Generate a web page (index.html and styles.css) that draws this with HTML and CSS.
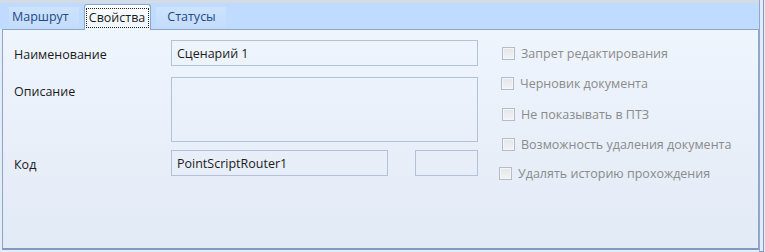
FILE: index.html
```html
<!DOCTYPE html>
<html lang="ru">
<head>
<meta charset="utf-8">
<link rel="stylesheet" href="styles.css">
</head>
<body>
<div class="window">
  <div class="frame">
    <div class="topline"></div>
    <div class="tabbar">
      <div class="tab tab-first">Маршрут</div>
      <div class="tab active"><span class="focus">Свойства</span></div>
      <div class="tab tab-last">Статусы</div>
    </div>
    <div class="panel">
      <div class="form">
        <div class="row row-name">
          <span class="label">Наименование</span>
          <div class="input wide">Сценарий 1</div>
        </div>
        <div class="row row-desc">
          <span class="label">Описание</span>
          <div class="input area"></div>
        </div>
        <div class="row row-code">
          <span class="label">Код</span>
          <div class="input code">PointScriptRouter1</div>
          <div class="input small"></div>
        </div>
      </div>
      <div class="checks">
        <div class="check off3"><span class="box"></span><span class="ctext">Запрет редактирования</span></div>
        <div class="check off2"><span class="box"></span><span class="ctext">Черновик документа</span></div>
        <div class="check off3"><span class="box"></span><span class="ctext">Не показывать в ПТЗ</span></div>
        <div class="check off3"><span class="box"></span><span class="ctext">Возможность удаления документа</span></div>
        <div class="check off0 last"><span class="box"></span><span class="ctext">Удалять историю прохождения</span></div>
      </div>
    </div>
  </div>
  <div class="edge"></div>
</div>
</body>
</html>
```

FILE: styles.css
```css
html, body {
  margin: 0;
  padding: 0;
  background: #e4ecf7;
}

body {
  font-family: "Open Sans", "Noto Sans", "Liberation Sans", sans-serif;
  font-size: 12.5px;
  color: #1b1b1b;
}

.window {
  width: 765px;
  height: 252px;
  display: flex;
  background: #e4ecf7;
  overflow: hidden;
}

.frame {
  width: 759px;
  height: 252px;
  border-right: 1px solid #93a9c9;
  display: flex;
  flex-direction: column;
}

.edge {
  width: 3px;
  height: 251px;
  border-right: 1px solid #7f99bf;
  border-bottom: 1px solid #7f99bf;
}

.topline {
  height: 3px;
  background: #d3dbe4;
}

.tabbar {
  height: 26px;
  background: #bfdbff;
  display: flex;
  align-items: flex-end;
  padding-left: 9px;
  gap: 4px;
}

.tab {
  height: 22px;
  line-height: 20px;
  padding: 0 11px;
  color: #1f4a86;
  background: linear-gradient(#cde3fd, #c3dcfb);
  box-sizing: border-box;
  white-space: nowrap;
}

.tab.tab-first {
  padding: 0 10px 0 3px;
}

.tab.tab-last {
  padding: 0 10px 0 11px;
  margin-left: 1px;
}

.tab.active {
  position: relative;
  z-index: 1;
  height: 26px;
  margin-bottom: -1px;
  margin-left: 1px;
  padding: 3px 1px 0 1px;
  border: 1px solid #8ca5c9;
  border-bottom: none;
  border-radius: 3px 3px 0 0;
  background: linear-gradient(#fbfdff, #eef5fd);
  color: #1b1b1b;
}

.focus {
  display: inline-block;
  border: 1px dotted #222;
  line-height: 18px;
  padding: 0 3px 0 2px;
}

.panel {
  margin-left: 2px;
  width: 757px;
  height: 221px;
  box-sizing: border-box;
  border: 1px solid #8ca5c9;
  border-bottom: 2px solid #7f9ac2;
  background: linear-gradient(#eff5fd, #e2eaf6);
  display: flex;
  align-items: flex-start;
  padding: 10px 0 0 11px;
}

.form {
  width: 464px;
  display: flex;
  flex-direction: column;
}

.row {
  display: flex;
  align-items: flex-start;
}

.row-desc {
  margin-top: 10px;
}

.row-code {
  margin-top: 8px;
}

.label {
  width: 157px;
  line-height: 24px;
  padding-top: 3px;
  flex: none;
}

.input {
  box-sizing: border-box;
  height: 26px;
  border: 1px solid #b2c2da;
  background: transparent;
  padding: 2px 5px 0 5px;
  line-height: 22px;
  white-space: nowrap;
}

.input.wide {
  width: 307px;
}

.input.area {
  width: 307px;
  height: 65px;
}

.input.code {
  width: 218px;
}

.input.small {
  width: 63px;
  margin-left: 27px;
}

.checks {
  margin-left: 21px;
  margin-top: -2px;
  display: flex;
  flex-direction: column;
  color: #8b8b8b;
}

.check {
  height: 30.5px;
  display: flex;
  align-items: center;
}

.check.last {
  margin-top: -2px;
}

.check.off3 { padding-left: 3px; }
.check.off2 { padding-left: 2px; }
.check.off0 { padding-left: 0; }

.box {
  width: 13px;
  height: 13px;
  box-sizing: border-box;
  border: 1px solid #b4bcc7;
  background: linear-gradient(#e3e6ea, #f2f3f5);
  box-shadow: inset 0 0 0 1px #f4f5f7;
  margin-right: 6px;
  flex: none;
}

.ctext {
  white-space: nowrap;
}
```
